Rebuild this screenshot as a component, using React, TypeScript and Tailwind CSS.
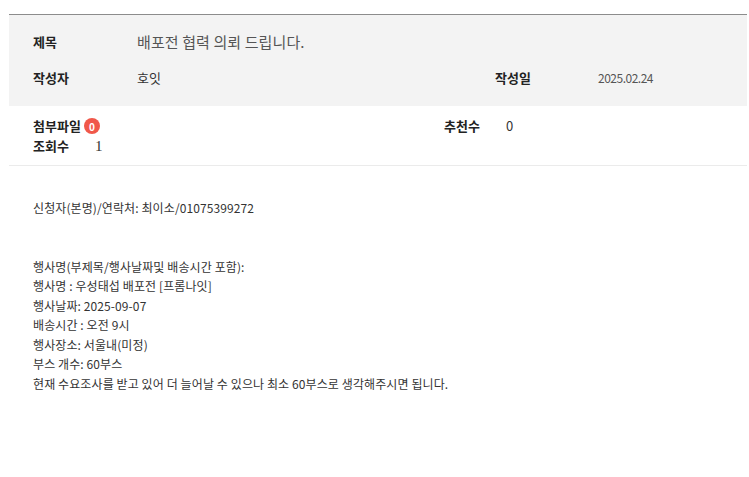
const bodyLines = [
	"신청자(본명)/연락처: 최이소/01075399272",
	"",
	"",
	"행사명(부제목/행사날짜및 배송시간 포함):",
	"행사명 : 우성태섭 배포전 [프롬나잇]",
	"행사날짜: 2025-09-07",
	"배송시간 : 오전 9시",
	"행사장소: 서울내(미정)",
	"부스 개수: 60부스",
	"현재 수요조사를 받고 있어 더 늘어날 수 있으나 최소 60부스로 생각해주시면 됩니다.",
]

export default function App() {
	return (
		<div className="min-h-[477px] bg-white pt-[14px] pl-[9px] pr-[2px] font-['Noto_Sans_CJK_KR','Noto_Sans',sans-serif] text-[#333]">
			<div className="border-t border-[#8c8c8c]">
				<div className="flex h-[91px] flex-col gap-4 bg-[#f3f3f3] px-6 pt-[17px]">
					<div className="flex h-5 items-center">
						<span className="w-[104px] text-[13px] font-bold text-[#222]">제목</span>
						<span className="text-[15px] tracking-[0.1px] text-[#555]">배포전 협력 의뢰 드립니다.</span>
					</div>
					<div className="flex h-5 items-center">
						<span className="w-[104px] text-[13px] font-bold text-[#222]">작성자</span>
						<span className="w-[358px] text-[13px] text-[#333]">호잇</span>
						<span className="w-[103px] text-[13px] font-bold text-[#222]">작성일</span>
						<span className="text-[12px] tracking-[-0.5px] text-[#555]">2025.02.24</span>
					</div>
				</div>
				<div className="flex h-[60px] border-b border-[#ebebeb] px-6 pt-[10px]">
					<div className="w-[411px]">
						<div className="flex h-5 items-center gap-[3px]">
							<span className="text-[13px] font-bold text-[#222]">첨부파일</span>
							<span className="flex h-4 w-4 items-center justify-center rounded-full bg-[#f0584a] text-[10px] font-bold text-white">0</span>
						</div>
						<div className="flex h-5 items-center">
							<span className="w-[62px] text-[13px] font-bold text-[#222]">조회수</span>
							<span className="font-['Liberation_Serif',serif] text-[15px] text-[#333]">1</span>
						</div>
					</div>
					<div className="flex h-5 items-center">
						<span className="w-[62px] text-[13px] font-bold text-[#222]">추천수</span>
						<span className="text-[13px] text-[#333]">0</span>
					</div>
				</div>
				<div className="px-6 pt-[32px] text-[12px] leading-[19.5px] tracking-[0.1px] text-[#333]">
					{bodyLines.map((line, i) => (
						<p key={i} className="h-[19.5px]">
							{line}
						</p>
					))}
				</div>
			</div>
		</div>
	)
}
